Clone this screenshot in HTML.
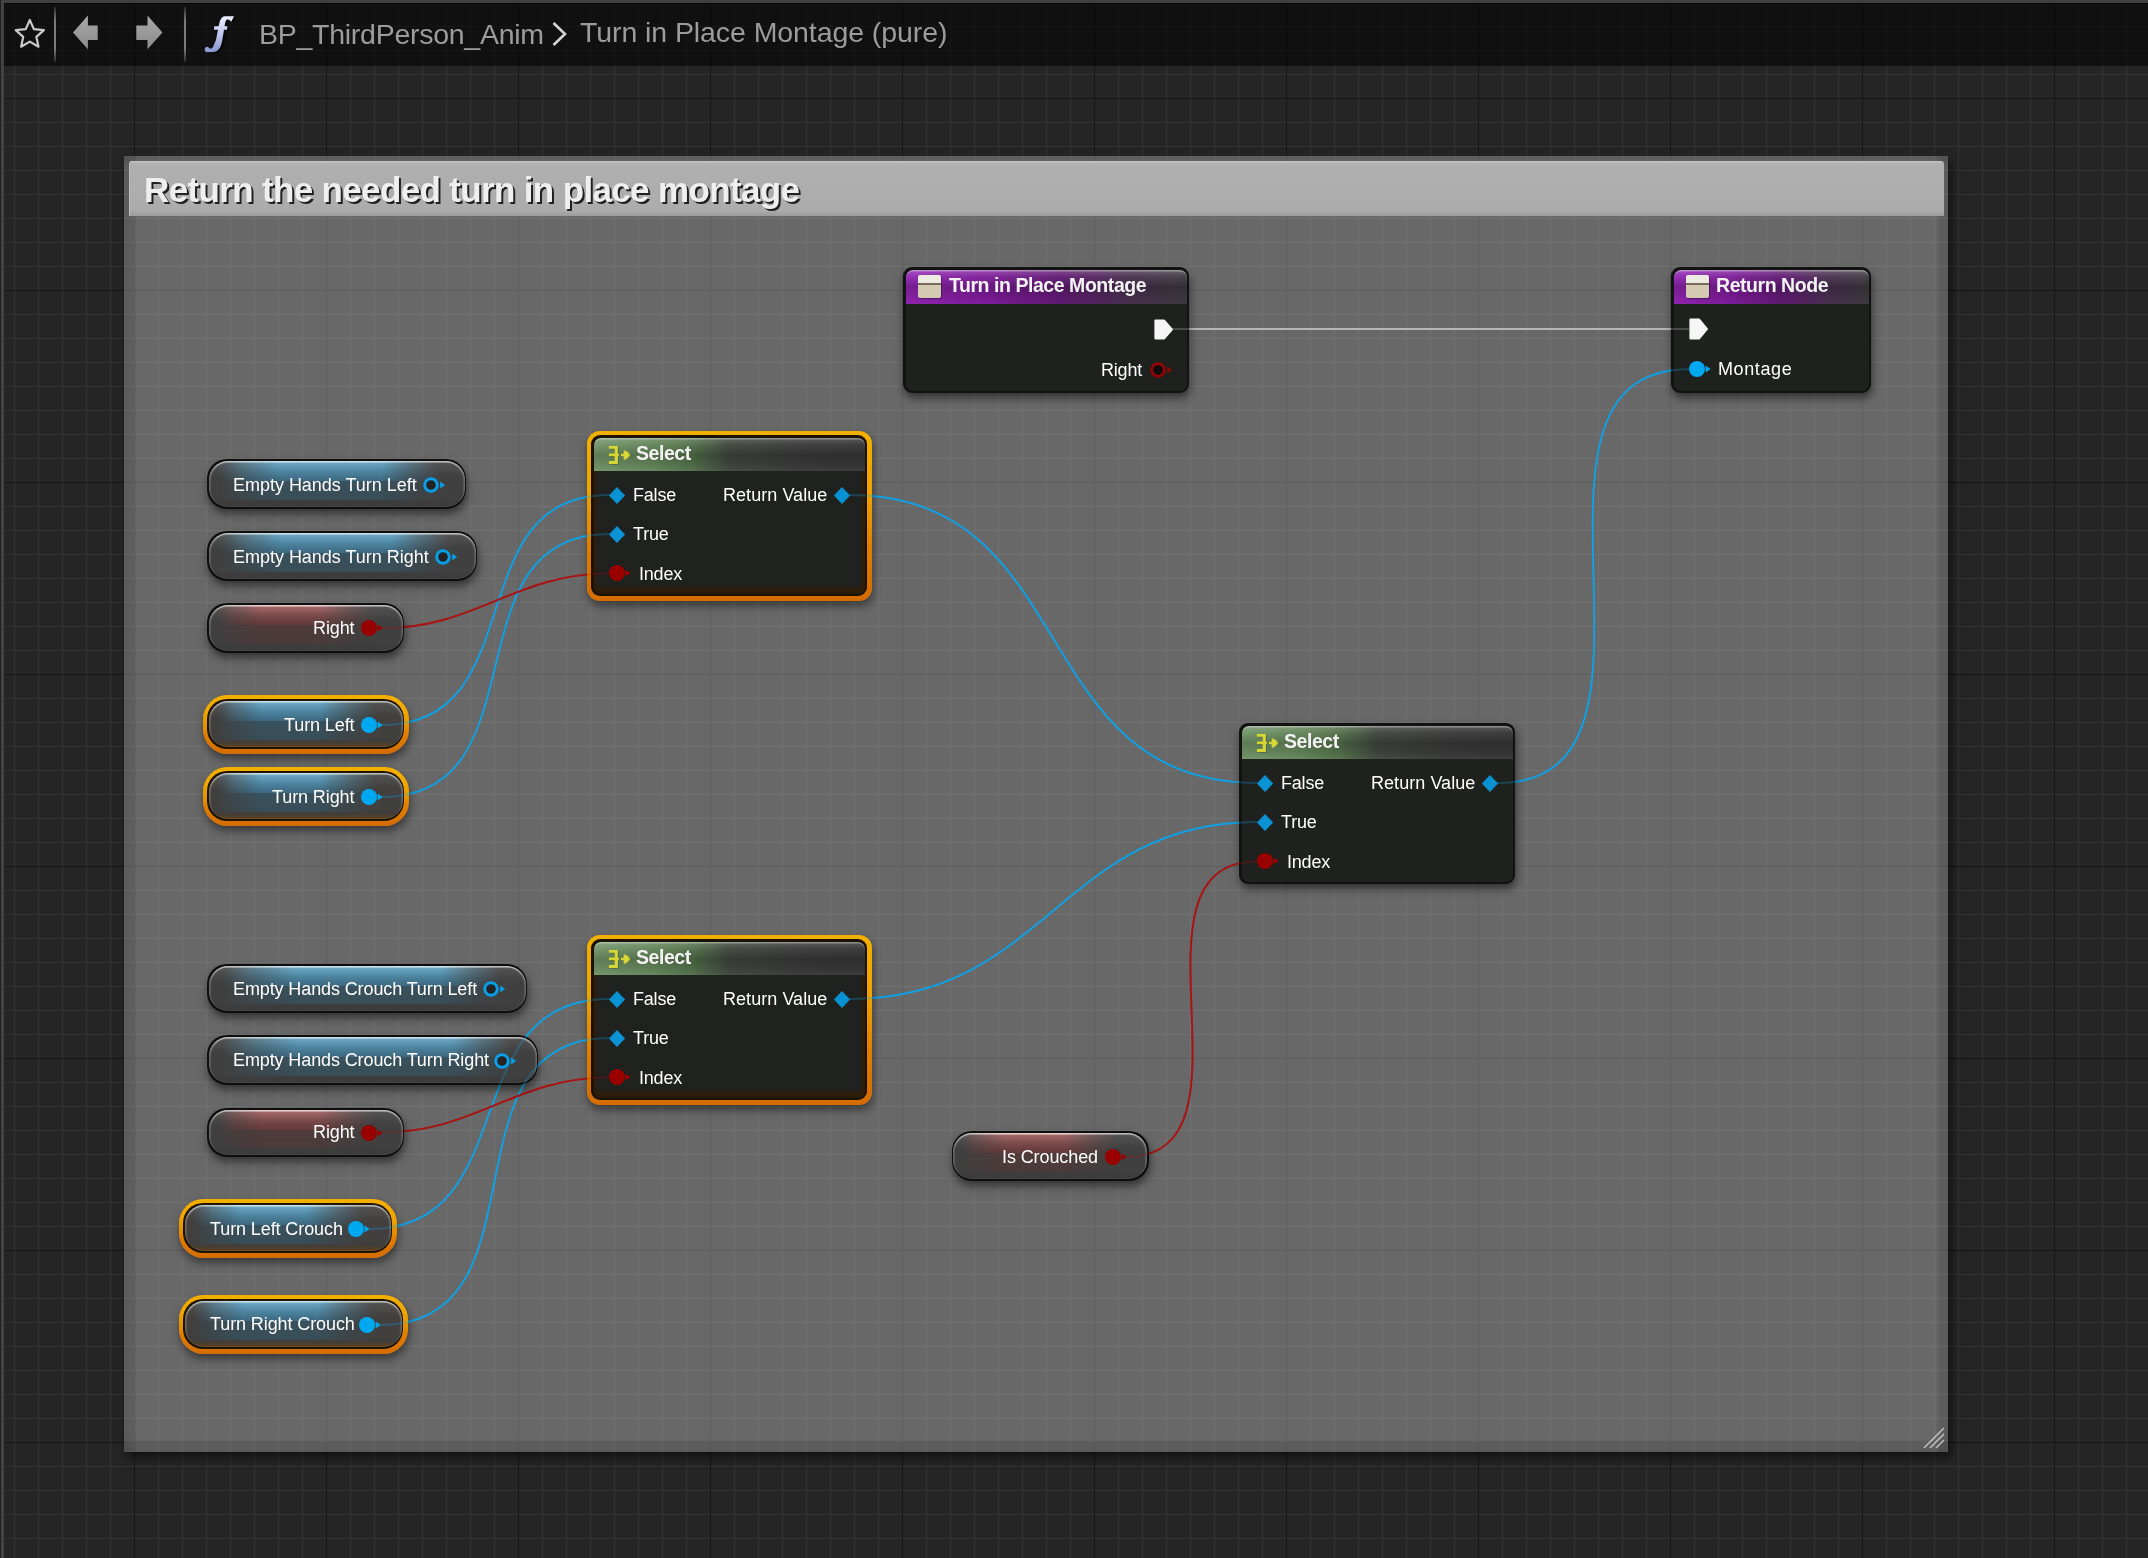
<!DOCTYPE html><html><head><meta charset="utf-8"><style>
*{margin:0;padding:0;box-sizing:border-box}
html,body{width:2148px;height:1558px;overflow:hidden;background:#252525}
body{position:relative;font-family:"Liberation Sans", sans-serif}
.abs{position:absolute}
.t{position:absolute;white-space:nowrap;font-family:"Liberation Sans", sans-serif;will-change:transform}
</style></head><body><div class="abs" style="left:0;top:0;width:2148px;height:1558px;background:linear-gradient(to right, #161616 0 1px, transparent 1px) 134px 0/192px 192px,linear-gradient(to bottom, #161616 0 1px, transparent 1px) 0 98px/192px 192px,linear-gradient(to right, #333333 0 1px, transparent 1px) 14px 0/24px 24px,linear-gradient(to bottom, #333333 0 1px, transparent 1px) 0 2px/24px 24px,#252525"></div>
<div class="abs" style="left:124px;top:156px;width:1824px;height:1296px;background:rgba(255,255,255,0.31);box-shadow:3px 5px 9px rgba(0,0,0,0.55)"></div>
<div class="abs" style="left:124px;top:156px;width:1824px;height:1296px;background:linear-gradient(to right, rgba(0,0,0,0.13) 0, rgba(0,0,0,0.1) 8px, rgba(0,0,0,0) 13px) left top/14px 100% no-repeat,linear-gradient(to left, rgba(0,0,0,0.13) 0, rgba(0,0,0,0.1) 8px, rgba(0,0,0,0) 13px) right top/14px 100% no-repeat,linear-gradient(to top, rgba(0,0,0,0.14) 0, rgba(0,0,0,0.1) 8px, rgba(0,0,0,0) 14px) left bottom/100% 15px no-repeat,linear-gradient(to bottom, rgba(0,0,0,0.1) 0, rgba(0,0,0,0.08) 5px, rgba(0,0,0,0) 8px) left top/100% 8px no-repeat"></div>
<div class="abs" style="left:129px;top:161px;width:1815px;height:55px;background:linear-gradient(#c4c4c4 0, #b2b2b2 2.5px, #afafaf 10%, #acacac 90%, #9c9c9c 100%);border-left:1px solid #bdbdbd;border-radius:3px 3px 0 0"></div>
<div class="t" style="left:144.00px;top:172.37px;font-size:35px;line-height:35px;font-weight:700;color:#efefef;letter-spacing:-0.65px;text-shadow:2px 2px 0 #202020;">Return the needed turn in place montage</div>
<svg class="abs" style="left:1920px;top:1426px" width="26" height="24" viewBox="0 0 26 24"><path d="M4 22 L24 2 M10 22 L24 8 M16 22 L24 14" stroke="#cfcfcf" stroke-width="1.6" fill="none" opacity="0.85"/></svg>
<svg class="abs" style="left:0;top:0" width="2148" height="1558"><path d="M1172 329 C1344.3 329 1516.7 329 1689 329" stroke="#b8b8b8" stroke-width="2" fill="none" opacity="1"/><path d="M1498 783 C1699.6 783 1487.4 369.3 1689 369.3" stroke="#12a0e2" stroke-width="1.9" fill="none" opacity="1"/><path d="M850 495 C1081.7 495 1025.3 783 1257 783" stroke="#12a0e2" stroke-width="1.9" fill="none" opacity="1"/><path d="M850 999 C1044.7 999 1062.3 822 1257 822" stroke="#12a0e2" stroke-width="1.9" fill="none" opacity="1"/><path d="M1126 1157 C1268.2 1157 1114.8 861.5 1257 861.5" stroke="#a81414" stroke-width="1.9" fill="none" opacity="1"/><path d="M382 725 C534.3 725 456.7 495 609 495" stroke="#12a0e2" stroke-width="1.9" fill="none" opacity="1"/><path d="M382 797 C545.3 797 445.7 534 609 534" stroke="#12a0e2" stroke-width="1.9" fill="none" opacity="1"/><path d="M382 628.3 C476.0 628.3 515.0 573.4 609 573.4" stroke="#a81414" stroke-width="1.9" fill="none" opacity="1"/><path d="M369 1229 C525.7 1229 452.3 999 609 999" stroke="#12a0e2" stroke-width="1.9" fill="none" opacity="1"/><path d="M380 1325 C552.0 1325 437.0 1038 609 1038" stroke="#12a0e2" stroke-width="1.9" fill="none" opacity="1"/><path d="M382 1132.5 C476.0 1132.5 515.0 1077.4 609 1077.4" stroke="#a81414" stroke-width="1.9" fill="none" opacity="1"/></svg>
<div class="abs" style="left:903px;top:267px;width:286px;height:126px;border-radius:9px;background:#121212;box-shadow:1px 5px 9px rgba(0,0,0,0.5);"></div>
<div class="abs" style="left:905.5px;top:269.5px;width:281px;height:121px;border-radius:7px;background:rgba(32,34,32,0.96);"></div>
<div class="abs" style="left:905.5px;top:269.5px;width:281px;height:34px;border-radius:7px 7px 0 0;background:linear-gradient(to bottom, rgba(255,255,255,0.22) 0, rgba(255,255,255,0.05) 20%, rgba(0,0,0,0.18) 50%, rgba(0,0,0,0.08) 80%, rgba(255,255,255,0.0) 100%),linear-gradient(to right, #9024b0 0%, #7c1c98 30%, #601a72 55%, #48304e 80%, #3e3a40 100%);box-shadow:inset 0 1.5px 0 rgba(255,255,255,0.32)"></div>
<div class="abs" style="left:918px;top:274.5px;width:23px;height:23px;border-radius:2px;background:linear-gradient(#ebebe0 0 36%, #7a6a5a 36% 44%, #d4cab4 44% 100%);box-shadow:1px 1px 1px rgba(0,0,0,0.35)"></div>
<div class="t" style="left:949.00px;top:276.19px;font-size:19.5px;line-height:19.5px;font-weight:700;color:#f2f2f2;letter-spacing:-0.45px;">Turn in Place Montage</div>
<svg class="abs" style="left:1154px;top:319px" width="19" height="21" viewBox="0 0 19 21"><path d="M1.5 1.5 L9.9 1.5 L17.8 10.5 L9.9 19.5 L1.5 19.5 Z" fill="#f6f6f6" stroke="#f6f6f6" stroke-width="2.2" stroke-linejoin="round"/></svg>
<div class="t" style="right:1006.00px;top:360.76px;font-size:18px;line-height:18px;font-weight:400;color:#ffffff;letter-spacing:-0.2px;">Right</div>
<svg class="abs" style="left:1146.00px;top:357.50px" width="30" height="24" viewBox="0 0 30 24"><path d="M21.2 8.4 L26.2 12 L21.2 15.6 Z" fill="#8e0606"/><circle cx="12" cy="12" r="6.3" fill="#0c0c0c" stroke="#8e0606" stroke-width="3"/></svg>
<div class="abs" style="left:1671px;top:267px;width:200px;height:126px;border-radius:9px;background:#121212;box-shadow:1px 5px 9px rgba(0,0,0,0.5);"></div>
<div class="abs" style="left:1673.5px;top:269.5px;width:195px;height:121px;border-radius:7px;background:rgba(32,34,32,0.96);"></div>
<div class="abs" style="left:1673.5px;top:269.5px;width:195px;height:34px;border-radius:7px 7px 0 0;background:linear-gradient(to bottom, rgba(255,255,255,0.22) 0, rgba(255,255,255,0.05) 20%, rgba(0,0,0,0.18) 50%, rgba(0,0,0,0.08) 80%, rgba(255,255,255,0.0) 100%),linear-gradient(to right, #9024b0 0%, #7c1c98 30%, #601a72 55%, #48304e 80%, #3e3a40 100%);box-shadow:inset 0 1.5px 0 rgba(255,255,255,0.32)"></div>
<div class="abs" style="left:1686px;top:275px;width:23px;height:23px;border-radius:2px;background:linear-gradient(#ebebe0 0 36%, #7a6a5a 36% 44%, #d4cab4 44% 100%);box-shadow:1px 1px 1px rgba(0,0,0,0.35)"></div>
<div class="t" style="left:1716.00px;top:276.49px;font-size:19.5px;line-height:19.5px;font-weight:700;color:#f2f2f2;letter-spacing:-0.45px;">Return Node</div>
<svg class="abs" style="left:1689px;top:318px" width="19" height="22" viewBox="0 0 19 22"><path d="M1.5 1.5 L9.9 1.5 L17.8 11.0 L9.9 20.5 L1.5 20.5 Z" fill="#f6f6f6" stroke="#f6f6f6" stroke-width="2.2" stroke-linejoin="round"/></svg>
<svg class="abs" style="left:1685.00px;top:357.30px" width="30" height="24" viewBox="0 0 30 24"><path d="M20.6 8.4 L25.6 12 L20.6 15.6 Z" fill="#00a8f0"/><circle cx="12" cy="12" r="8.0" fill="#00a8f0"/></svg>
<div class="t" style="left:1718.00px;top:360.46px;font-size:18px;line-height:18px;font-weight:400;color:#ffffff;letter-spacing:0.6px;">Montage</div>
<div class="abs" style="left:586.5px;top:430.5px;width:285px;height:170px;border-radius:13px;background:linear-gradient(#f4b000 0%, #eea400 35%, #e07c00 70%, #d46c00 100%);box-shadow:1px 5px 9px rgba(0,0,0,0.45)"></div>
<div class="abs" style="left:591px;top:435px;width:276px;height:161px;border-radius:9px;background:#1a1206;"></div>
<div class="abs" style="left:593.5px;top:437.5px;width:271px;height:156px;border-radius:7px;background:linear-gradient(to bottom, rgba(32,34,32,0.97) 0, rgba(32,34,32,0.97) 94%, rgba(46,30,10,0.97) 97.5%, rgba(40,26,8,0.97) 100%);box-shadow:inset 3px 0 0 rgba(46,30,10,0.95), inset -3px 0 0 rgba(46,30,10,0.95);"></div>
<div class="abs" style="left:593.5px;top:437.5px;width:271px;height:33.5px;border-radius:7px 7px 0 0;background:linear-gradient(to bottom, rgba(255,255,255,0.18) 0, rgba(255,255,255,0.03) 22%, rgba(0,0,0,0.16) 52%, rgba(0,0,0,0.06) 82%, rgba(255,255,255,0.03) 100%),linear-gradient(to right, #729468 0%, #628458 22%, #52704a 36%, #40463e 50%, #3a3a3a 75%, #363636 100%);box-shadow:inset 0 1.5px 0 rgba(255,255,255,0.32)"></div>
<svg class="abs" style="left:606px;top:444px" width="26" height="22" viewBox="0 0 26 22"><path d="M2.9 1.9 H11.9 V19.9 H2.9 V17 H8.7 V12.3 H2.9 V9.5 H8.7 V4.8 H2.9 Z" fill="rgba(0,0,0,0.25)" transform="translate(0.8,0.8)"/><path d="M2.9 1.9 H11.9 V9.5 H12.8 V12.3 H11.9 V19.9 H2.9 V17 H8.7 V12.3 H2.9 V9.5 H8.7 V4.8 H2.9 Z" fill="#d6d634"/><path d="M15 9.8 H18 V12.2 H15 Z" fill="#d6d634"/><path d="M17.7 6.2 C20.5 6.2 22.6 8.6 24.2 11 C22.6 13.4 20.5 15.8 17.7 15.8 Z" fill="#d6d634"/></svg>
<div class="t" style="left:636.00px;top:443.99px;font-size:19.5px;line-height:19.5px;font-weight:700;color:#f2f2f2;letter-spacing:-0.45px;">Select</div>
<svg class="abs" style="left:607.50px;top:485.70px" width="18" height="19" viewBox="0 0 18 19"><path d="M0.9 9.5 L9 1 L17.1 9.5 L9 18 Z" fill="#0a92d2"/></svg>
<div class="t" style="left:633.00px;top:486.36px;font-size:18px;line-height:18px;font-weight:400;color:#ffffff;letter-spacing:-0.2px;">False</div>
<svg class="abs" style="left:607.50px;top:524.70px" width="18" height="19" viewBox="0 0 18 19"><path d="M0.9 9.5 L9 1 L17.1 9.5 L9 18 Z" fill="#0a92d2"/></svg>
<div class="t" style="left:633.00px;top:525.46px;font-size:18px;line-height:18px;font-weight:400;color:#ffffff;letter-spacing:-0.2px;">True</div>
<svg class="abs" style="left:605.00px;top:561.40px" width="30" height="24" viewBox="0 0 30 24"><path d="M20.6 8.4 L25.6 12 L20.6 15.6 Z" fill="#990000"/><circle cx="12" cy="12" r="8.0" fill="#990000"/></svg>
<div class="t" style="left:639.00px;top:565.06px;font-size:18px;line-height:18px;font-weight:400;color:#ffffff;letter-spacing:-0.2px;">Index</div>
<div class="t" style="right:1321.00px;top:486.36px;font-size:18px;line-height:18px;font-weight:400;color:#ffffff;letter-spacing:0.05px;">Return Value</div>
<svg class="abs" style="left:832.80px;top:485.70px" width="18" height="19" viewBox="0 0 18 19"><path d="M0.9 9.5 L9 1 L17.1 9.5 L9 18 Z" fill="#0a92d2"/></svg>
<div class="abs" style="left:1239.4px;top:723px;width:276.0px;height:161px;border-radius:9px;background:#121212;box-shadow:1px 5px 9px rgba(0,0,0,0.5);"></div>
<div class="abs" style="left:1241.9px;top:725.5px;width:271.0px;height:156px;border-radius:7px;background:rgba(32,34,32,0.96);"></div>
<div class="abs" style="left:1241.9px;top:725.5px;width:271.0px;height:33.5px;border-radius:7px 7px 0 0;background:linear-gradient(to bottom, rgba(255,255,255,0.18) 0, rgba(255,255,255,0.03) 22%, rgba(0,0,0,0.16) 52%, rgba(0,0,0,0.06) 82%, rgba(255,255,255,0.03) 100%),linear-gradient(to right, #729468 0%, #628458 22%, #52704a 36%, #40463e 50%, #3a3a3a 75%, #363636 100%);box-shadow:inset 0 1.5px 0 rgba(255,255,255,0.32)"></div>
<svg class="abs" style="left:1254.4px;top:732px" width="26" height="22" viewBox="0 0 26 22"><path d="M2.9 1.9 H11.9 V19.9 H2.9 V17 H8.7 V12.3 H2.9 V9.5 H8.7 V4.8 H2.9 Z" fill="rgba(0,0,0,0.25)" transform="translate(0.8,0.8)"/><path d="M2.9 1.9 H11.9 V9.5 H12.8 V12.3 H11.9 V19.9 H2.9 V17 H8.7 V12.3 H2.9 V9.5 H8.7 V4.8 H2.9 Z" fill="#d6d634"/><path d="M15 9.8 H18 V12.2 H15 Z" fill="#d6d634"/><path d="M17.7 6.2 C20.5 6.2 22.6 8.6 24.2 11 C22.6 13.4 20.5 15.8 17.7 15.8 Z" fill="#d6d634"/></svg>
<div class="t" style="left:1284.40px;top:731.99px;font-size:19.5px;line-height:19.5px;font-weight:700;color:#f2f2f2;letter-spacing:-0.45px;">Select</div>
<svg class="abs" style="left:1255.90px;top:773.70px" width="18" height="19" viewBox="0 0 18 19"><path d="M0.9 9.5 L9 1 L17.1 9.5 L9 18 Z" fill="#0a92d2"/></svg>
<div class="t" style="left:1281.40px;top:774.36px;font-size:18px;line-height:18px;font-weight:400;color:#ffffff;letter-spacing:-0.2px;">False</div>
<svg class="abs" style="left:1255.90px;top:812.70px" width="18" height="19" viewBox="0 0 18 19"><path d="M0.9 9.5 L9 1 L17.1 9.5 L9 18 Z" fill="#0a92d2"/></svg>
<div class="t" style="left:1281.40px;top:813.46px;font-size:18px;line-height:18px;font-weight:400;color:#ffffff;letter-spacing:-0.2px;">True</div>
<svg class="abs" style="left:1253.40px;top:849.40px" width="30" height="24" viewBox="0 0 30 24"><path d="M20.6 8.4 L25.6 12 L20.6 15.6 Z" fill="#990000"/><circle cx="12" cy="12" r="8.0" fill="#990000"/></svg>
<div class="t" style="left:1287.40px;top:853.06px;font-size:18px;line-height:18px;font-weight:400;color:#ffffff;letter-spacing:-0.2px;">Index</div>
<div class="t" style="right:672.60px;top:774.36px;font-size:18px;line-height:18px;font-weight:400;color:#ffffff;letter-spacing:0.05px;">Return Value</div>
<svg class="abs" style="left:1481.20px;top:773.70px" width="18" height="19" viewBox="0 0 18 19"><path d="M0.9 9.5 L9 1 L17.1 9.5 L9 18 Z" fill="#0a92d2"/></svg>
<div class="abs" style="left:586.5px;top:934.5px;width:285px;height:170px;border-radius:13px;background:linear-gradient(#f4b000 0%, #eea400 35%, #e07c00 70%, #d46c00 100%);box-shadow:1px 5px 9px rgba(0,0,0,0.45)"></div>
<div class="abs" style="left:591px;top:939px;width:276px;height:161px;border-radius:9px;background:#1a1206;"></div>
<div class="abs" style="left:593.5px;top:941.5px;width:271px;height:156px;border-radius:7px;background:linear-gradient(to bottom, rgba(32,34,32,0.97) 0, rgba(32,34,32,0.97) 94%, rgba(46,30,10,0.97) 97.5%, rgba(40,26,8,0.97) 100%);box-shadow:inset 3px 0 0 rgba(46,30,10,0.95), inset -3px 0 0 rgba(46,30,10,0.95);"></div>
<div class="abs" style="left:593.5px;top:941.5px;width:271px;height:33.5px;border-radius:7px 7px 0 0;background:linear-gradient(to bottom, rgba(255,255,255,0.18) 0, rgba(255,255,255,0.03) 22%, rgba(0,0,0,0.16) 52%, rgba(0,0,0,0.06) 82%, rgba(255,255,255,0.03) 100%),linear-gradient(to right, #729468 0%, #628458 22%, #52704a 36%, #40463e 50%, #3a3a3a 75%, #363636 100%);box-shadow:inset 0 1.5px 0 rgba(255,255,255,0.32)"></div>
<svg class="abs" style="left:606px;top:948px" width="26" height="22" viewBox="0 0 26 22"><path d="M2.9 1.9 H11.9 V19.9 H2.9 V17 H8.7 V12.3 H2.9 V9.5 H8.7 V4.8 H2.9 Z" fill="rgba(0,0,0,0.25)" transform="translate(0.8,0.8)"/><path d="M2.9 1.9 H11.9 V9.5 H12.8 V12.3 H11.9 V19.9 H2.9 V17 H8.7 V12.3 H2.9 V9.5 H8.7 V4.8 H2.9 Z" fill="#d6d634"/><path d="M15 9.8 H18 V12.2 H15 Z" fill="#d6d634"/><path d="M17.7 6.2 C20.5 6.2 22.6 8.6 24.2 11 C22.6 13.4 20.5 15.8 17.7 15.8 Z" fill="#d6d634"/></svg>
<div class="t" style="left:636.00px;top:947.99px;font-size:19.5px;line-height:19.5px;font-weight:700;color:#f2f2f2;letter-spacing:-0.45px;">Select</div>
<svg class="abs" style="left:607.50px;top:989.70px" width="18" height="19" viewBox="0 0 18 19"><path d="M0.9 9.5 L9 1 L17.1 9.5 L9 18 Z" fill="#0a92d2"/></svg>
<div class="t" style="left:633.00px;top:990.36px;font-size:18px;line-height:18px;font-weight:400;color:#ffffff;letter-spacing:-0.2px;">False</div>
<svg class="abs" style="left:607.50px;top:1028.70px" width="18" height="19" viewBox="0 0 18 19"><path d="M0.9 9.5 L9 1 L17.1 9.5 L9 18 Z" fill="#0a92d2"/></svg>
<div class="t" style="left:633.00px;top:1029.46px;font-size:18px;line-height:18px;font-weight:400;color:#ffffff;letter-spacing:-0.2px;">True</div>
<svg class="abs" style="left:605.00px;top:1065.40px" width="30" height="24" viewBox="0 0 30 24"><path d="M20.6 8.4 L25.6 12 L20.6 15.6 Z" fill="#990000"/><circle cx="12" cy="12" r="8.0" fill="#990000"/></svg>
<div class="t" style="left:639.00px;top:1069.06px;font-size:18px;line-height:18px;font-weight:400;color:#ffffff;letter-spacing:-0.2px;">Index</div>
<div class="t" style="right:1321.00px;top:990.36px;font-size:18px;line-height:18px;font-weight:400;color:#ffffff;letter-spacing:0.05px;">Return Value</div>
<svg class="abs" style="left:832.80px;top:989.70px" width="18" height="19" viewBox="0 0 18 19"><path d="M0.9 9.5 L9 1 L17.1 9.5 L9 18 Z" fill="#0a92d2"/></svg>
<div class="abs" style="left:207px;top:459px;width:259px;height:50px;border-radius:20px;background:#0e0e0e;box-shadow:1px 5px 8px rgba(0,0,0,0.5);"><div class="abs" style="left:1.5px;top:1.5px;right:1.5px;bottom:2.2px;border-radius:18.5px;background:rgba(68,68,68,0.92);overflow:hidden"><div class="abs" style="left:0;top:0;right:0;height:20px;background:linear-gradient(to bottom, rgba(115,185,218,0.95) 0, rgba(92,165,200,0.92) 12%, rgba(76,142,176,0.88) 45%, rgba(60,112,138,0.85) 100%);-webkit-mask-image:linear-gradient(to right, rgba(0,0,0,0) 4%, rgba(0,0,0,0.5) 13%, #000 27%, #000 67.3%, rgba(0,0,0,0.45) 78.4%, rgba(0,0,0,0) 89.6%);"></div><div class="abs" style="left:0;top:20px;right:0;height:19px;background:linear-gradient(to bottom, rgba(56,84,98,0.88) 0, rgba(55,80,92,0.82) 100%);-webkit-mask-image:linear-gradient(to right, rgba(0,0,0,0) 4%, rgba(0,0,0,0.5) 13%, #000 27%, #000 67.3%, rgba(0,0,0,0.45) 78.4%, rgba(0,0,0,0) 89.6%);"></div><div class="abs" style="left:0;top:0;right:0;bottom:0;border-radius:18.5px;background:linear-gradient(to bottom, rgba(255,255,255,0.10), rgba(255,255,255,0) 35%, rgba(0,0,0,0) 80%, rgba(0,0,0,0.10));box-shadow:inset 0 1.5px 0 rgba(255,255,255,0.38), inset 1.5px 1.5px 1px rgba(255,255,255,0.22), inset -1.5px 1.5px 1px rgba(255,255,255,0.22), inset 0 -1px 0 rgba(255,255,255,0.07)"></div></div></div>
<div class="t" style="left:232.50px;top:475.66px;font-size:18px;line-height:18px;font-weight:400;color:#ffffff;letter-spacing:-0.02px;">Empty Hands Turn Left</div>
<svg class="abs" style="left:419.30px;top:473.00px" width="30" height="24" viewBox="0 0 30 24"><path d="M21.2 8.4 L26.2 12 L21.2 15.6 Z" fill="#0a9ee6"/><circle cx="12" cy="12" r="6.3" fill="#232323" stroke="#0a9ee6" stroke-width="3"/></svg>
<div class="abs" style="left:207px;top:531px;width:270px;height:50px;border-radius:20px;background:#0e0e0e;box-shadow:1px 5px 8px rgba(0,0,0,0.5);"><div class="abs" style="left:1.5px;top:1.5px;right:1.5px;bottom:2.2px;border-radius:18.5px;background:rgba(68,68,68,0.92);overflow:hidden"><div class="abs" style="left:0;top:0;right:0;height:20px;background:linear-gradient(to bottom, rgba(115,185,218,0.95) 0, rgba(92,165,200,0.92) 12%, rgba(76,142,176,0.88) 45%, rgba(60,112,138,0.85) 100%);-webkit-mask-image:linear-gradient(to right, rgba(0,0,0,0) 4%, rgba(0,0,0,0.5) 13%, #000 27%, #000 68.7%, rgba(0,0,0,0.45) 79.5%, rgba(0,0,0,0) 90.3%);"></div><div class="abs" style="left:0;top:20px;right:0;height:19px;background:linear-gradient(to bottom, rgba(56,84,98,0.88) 0, rgba(55,80,92,0.82) 100%);-webkit-mask-image:linear-gradient(to right, rgba(0,0,0,0) 4%, rgba(0,0,0,0.5) 13%, #000 27%, #000 68.7%, rgba(0,0,0,0.45) 79.5%, rgba(0,0,0,0) 90.3%);"></div><div class="abs" style="left:0;top:0;right:0;bottom:0;border-radius:18.5px;background:linear-gradient(to bottom, rgba(255,255,255,0.10), rgba(255,255,255,0) 35%, rgba(0,0,0,0) 80%, rgba(0,0,0,0.10));box-shadow:inset 0 1.5px 0 rgba(255,255,255,0.38), inset 1.5px 1.5px 1px rgba(255,255,255,0.22), inset -1.5px 1.5px 1px rgba(255,255,255,0.22), inset 0 -1px 0 rgba(255,255,255,0.07)"></div></div></div>
<div class="t" style="left:232.50px;top:547.66px;font-size:18px;line-height:18px;font-weight:400;color:#ffffff;letter-spacing:-0.02px;">Empty Hands Turn Right</div>
<svg class="abs" style="left:430.60px;top:545.00px" width="30" height="24" viewBox="0 0 30 24"><path d="M21.2 8.4 L26.2 12 L21.2 15.6 Z" fill="#0a9ee6"/><circle cx="12" cy="12" r="6.3" fill="#232323" stroke="#0a9ee6" stroke-width="3"/></svg>
<div class="abs" style="left:207px;top:603px;width:197px;height:50px;border-radius:20px;background:#0e0e0e;box-shadow:1px 5px 8px rgba(0,0,0,0.5);"><div class="abs" style="left:1.5px;top:1.5px;right:1.5px;bottom:2.2px;border-radius:18.5px;background:rgba(68,68,68,0.92);overflow:hidden"><div class="abs" style="left:0;top:0;right:0;height:20px;background:linear-gradient(to bottom, rgba(200,125,125,0.95) 0, rgba(165,92,92,0.9) 10%, rgba(130,70,70,0.85) 50%, rgba(105,58,58,0.85) 100%);-webkit-mask-image:linear-gradient(to right, rgba(0,0,0,0) 4%, rgba(0,0,0,0.5) 13%, #000 27%, #000 56.9%, rgba(0,0,0,0.45) 71.0%, rgba(0,0,0,0) 85.2%);"></div><div class="abs" style="left:0;top:20px;right:0;height:19px;background:linear-gradient(to bottom, rgba(82,58,58,0.85) 0, rgba(78,58,58,0.8) 100%);-webkit-mask-image:linear-gradient(to right, rgba(0,0,0,0) 4%, rgba(0,0,0,0.5) 13%, #000 27%, #000 56.9%, rgba(0,0,0,0.45) 71.0%, rgba(0,0,0,0) 85.2%);"></div><div class="abs" style="left:0;top:0;right:0;bottom:0;border-radius:18.5px;background:linear-gradient(to bottom, rgba(255,255,255,0.10), rgba(255,255,255,0) 35%, rgba(0,0,0,0) 80%, rgba(0,0,0,0.10));box-shadow:inset 0 1.5px 0 rgba(255,255,255,0.38), inset 1.5px 1.5px 1px rgba(255,255,255,0.22), inset -1.5px 1.5px 1px rgba(255,255,255,0.22), inset 0 -1px 0 rgba(255,255,255,0.07)"></div></div></div>
<div class="t" style="right:1793.50px;top:618.96px;font-size:18px;line-height:18px;font-weight:400;color:#ffffff;letter-spacing:-0.1px;">Right</div>
<svg class="abs" style="left:357.00px;top:616.30px" width="30" height="24" viewBox="0 0 30 24"><path d="M20.6 8.4 L25.6 12 L20.6 15.6 Z" fill="#990000"/><circle cx="12" cy="12" r="8.0" fill="#990000"/></svg>
<div class="abs" style="left:202.5px;top:694.5px;width:206px;height:59px;border-radius:24.5px;background:linear-gradient(#f4b000 0%, #eea400 35%, #e07c00 70%, #d46c00 100%);box-shadow:1px 5px 8px rgba(0,0,0,0.45)"></div>
<div class="abs" style="left:207px;top:699px;width:197px;height:50px;border-radius:20px;background:#1e1404;"><div class="abs" style="left:1.5px;top:1.5px;right:1.5px;bottom:2.2px;border-radius:18.5px;background:rgba(68,68,68,0.92);overflow:hidden"><div class="abs" style="left:0;top:0;right:0;height:20px;background:linear-gradient(to bottom, rgba(115,185,218,0.95) 0, rgba(92,165,200,0.92) 12%, rgba(76,142,176,0.88) 45%, rgba(60,112,138,0.85) 100%);-webkit-mask-image:linear-gradient(to right, rgba(0,0,0,0) 4%, rgba(0,0,0,0.5) 13%, #000 27%, #000 57.0%, rgba(0,0,0,0.45) 71.2%, rgba(0,0,0,0) 85.4%);"></div><div class="abs" style="left:0;top:20px;right:0;height:19px;background:linear-gradient(to bottom, rgba(56,84,98,0.88) 0, rgba(55,80,92,0.82) 100%);-webkit-mask-image:linear-gradient(to right, rgba(0,0,0,0) 4%, rgba(0,0,0,0.5) 13%, #000 27%, #000 57.0%, rgba(0,0,0,0.45) 71.2%, rgba(0,0,0,0) 85.4%);"></div><div class="abs" style="left:0;right:0;bottom:0;height:6px;background:linear-gradient(rgba(130,75,10,0),rgba(130,75,10,0.6))"></div><div class="abs" style="left:0;top:0;right:0;bottom:0;border-radius:18.5px;background:linear-gradient(to bottom, rgba(255,255,255,0.10), rgba(255,255,255,0) 35%, rgba(0,0,0,0) 80%, rgba(0,0,0,0.10));box-shadow:inset 0 1.5px 0 rgba(255,255,255,0.38), inset 1.5px 1.5px 1px rgba(255,255,255,0.22), inset -1.5px 1.5px 1px rgba(255,255,255,0.22), inset 0 -1px 0 rgba(255,255,255,0.07)"></div></div></div>
<div class="t" style="right:1793.50px;top:715.66px;font-size:18px;line-height:18px;font-weight:400;color:#ffffff;letter-spacing:-0.1px;">Turn Left</div>
<svg class="abs" style="left:357.30px;top:713.00px" width="30" height="24" viewBox="0 0 30 24"><path d="M20.6 8.4 L25.6 12 L20.6 15.6 Z" fill="#00a8f0"/><circle cx="12" cy="12" r="8.0" fill="#00a8f0"/></svg>
<div class="abs" style="left:202.5px;top:766.5px;width:206px;height:59px;border-radius:24.5px;background:linear-gradient(#f4b000 0%, #eea400 35%, #e07c00 70%, #d46c00 100%);box-shadow:1px 5px 8px rgba(0,0,0,0.45)"></div>
<div class="abs" style="left:207px;top:771px;width:197px;height:50px;border-radius:20px;background:#1e1404;"><div class="abs" style="left:1.5px;top:1.5px;right:1.5px;bottom:2.2px;border-radius:18.5px;background:rgba(68,68,68,0.92);overflow:hidden"><div class="abs" style="left:0;top:0;right:0;height:20px;background:linear-gradient(to bottom, rgba(115,185,218,0.95) 0, rgba(92,165,200,0.92) 12%, rgba(76,142,176,0.88) 45%, rgba(60,112,138,0.85) 100%);-webkit-mask-image:linear-gradient(to right, rgba(0,0,0,0) 4%, rgba(0,0,0,0.5) 13%, #000 27%, #000 57.0%, rgba(0,0,0,0.45) 71.2%, rgba(0,0,0,0) 85.4%);"></div><div class="abs" style="left:0;top:20px;right:0;height:19px;background:linear-gradient(to bottom, rgba(56,84,98,0.88) 0, rgba(55,80,92,0.82) 100%);-webkit-mask-image:linear-gradient(to right, rgba(0,0,0,0) 4%, rgba(0,0,0,0.5) 13%, #000 27%, #000 57.0%, rgba(0,0,0,0.45) 71.2%, rgba(0,0,0,0) 85.4%);"></div><div class="abs" style="left:0;right:0;bottom:0;height:6px;background:linear-gradient(rgba(130,75,10,0),rgba(130,75,10,0.6))"></div><div class="abs" style="left:0;top:0;right:0;bottom:0;border-radius:18.5px;background:linear-gradient(to bottom, rgba(255,255,255,0.10), rgba(255,255,255,0) 35%, rgba(0,0,0,0) 80%, rgba(0,0,0,0.10));box-shadow:inset 0 1.5px 0 rgba(255,255,255,0.38), inset 1.5px 1.5px 1px rgba(255,255,255,0.22), inset -1.5px 1.5px 1px rgba(255,255,255,0.22), inset 0 -1px 0 rgba(255,255,255,0.07)"></div></div></div>
<div class="t" style="right:1793.50px;top:787.66px;font-size:18px;line-height:18px;font-weight:400;color:#ffffff;letter-spacing:-0.1px;">Turn Right</div>
<svg class="abs" style="left:357.30px;top:785.00px" width="30" height="24" viewBox="0 0 30 24"><path d="M20.6 8.4 L25.6 12 L20.6 15.6 Z" fill="#00a8f0"/><circle cx="12" cy="12" r="8.0" fill="#00a8f0"/></svg>
<div class="abs" style="left:207px;top:964px;width:320px;height:49px;border-radius:20px;background:#0e0e0e;box-shadow:1px 5px 8px rgba(0,0,0,0.5);"><div class="abs" style="left:1.5px;top:1.5px;right:1.5px;bottom:2.2px;border-radius:18.5px;background:rgba(68,68,68,0.92);overflow:hidden"><div class="abs" style="left:0;top:0;right:0;height:20px;background:linear-gradient(to bottom, rgba(115,185,218,0.95) 0, rgba(92,165,200,0.92) 12%, rgba(76,142,176,0.88) 45%, rgba(60,112,138,0.85) 100%);-webkit-mask-image:linear-gradient(to right, rgba(0,0,0,0) 4%, rgba(0,0,0,0.5) 13%, #000 27%, #000 73.2%, rgba(0,0,0,0.45) 82.6%, rgba(0,0,0,0) 91.9%);"></div><div class="abs" style="left:0;top:20px;right:0;height:18px;background:linear-gradient(to bottom, rgba(56,84,98,0.88) 0, rgba(55,80,92,0.82) 100%);-webkit-mask-image:linear-gradient(to right, rgba(0,0,0,0) 4%, rgba(0,0,0,0.5) 13%, #000 27%, #000 73.2%, rgba(0,0,0,0.45) 82.6%, rgba(0,0,0,0) 91.9%);"></div><div class="abs" style="left:0;top:0;right:0;bottom:0;border-radius:18.5px;background:linear-gradient(to bottom, rgba(255,255,255,0.10), rgba(255,255,255,0) 35%, rgba(0,0,0,0) 80%, rgba(0,0,0,0.10));box-shadow:inset 0 1.5px 0 rgba(255,255,255,0.38), inset 1.5px 1.5px 1px rgba(255,255,255,0.22), inset -1.5px 1.5px 1px rgba(255,255,255,0.22), inset 0 -1px 0 rgba(255,255,255,0.07)"></div></div></div>
<div class="t" style="left:232.50px;top:979.66px;font-size:18px;line-height:18px;font-weight:400;color:#ffffff;letter-spacing:-0.11px;">Empty Hands Crouch Turn Left</div>
<svg class="abs" style="left:479.40px;top:977.00px" width="30" height="24" viewBox="0 0 30 24"><path d="M21.2 8.4 L26.2 12 L21.2 15.6 Z" fill="#0a9ee6"/><circle cx="12" cy="12" r="6.3" fill="#232323" stroke="#0a9ee6" stroke-width="3"/></svg>
<div class="abs" style="left:207px;top:1035px;width:331px;height:50px;border-radius:20px;background:#0e0e0e;box-shadow:1px 5px 8px rgba(0,0,0,0.5);"><div class="abs" style="left:1.5px;top:1.5px;right:1.5px;bottom:2.2px;border-radius:18.5px;background:rgba(68,68,68,0.92);overflow:hidden"><div class="abs" style="left:0;top:0;right:0;height:20px;background:linear-gradient(to bottom, rgba(115,185,218,0.95) 0, rgba(92,165,200,0.92) 12%, rgba(76,142,176,0.88) 45%, rgba(60,112,138,0.85) 100%);-webkit-mask-image:linear-gradient(to right, rgba(0,0,0,0) 4%, rgba(0,0,0,0.5) 13%, #000 27%, #000 74.1%, rgba(0,0,0,0.45) 83.1%, rgba(0,0,0,0) 92.0%);"></div><div class="abs" style="left:0;top:20px;right:0;height:19px;background:linear-gradient(to bottom, rgba(56,84,98,0.88) 0, rgba(55,80,92,0.82) 100%);-webkit-mask-image:linear-gradient(to right, rgba(0,0,0,0) 4%, rgba(0,0,0,0.5) 13%, #000 27%, #000 74.1%, rgba(0,0,0,0.45) 83.1%, rgba(0,0,0,0) 92.0%);"></div><div class="abs" style="left:0;top:0;right:0;bottom:0;border-radius:18.5px;background:linear-gradient(to bottom, rgba(255,255,255,0.10), rgba(255,255,255,0) 35%, rgba(0,0,0,0) 80%, rgba(0,0,0,0.10));box-shadow:inset 0 1.5px 0 rgba(255,255,255,0.38), inset 1.5px 1.5px 1px rgba(255,255,255,0.22), inset -1.5px 1.5px 1px rgba(255,255,255,0.22), inset 0 -1px 0 rgba(255,255,255,0.07)"></div></div></div>
<div class="t" style="left:232.50px;top:1051.46px;font-size:18px;line-height:18px;font-weight:400;color:#ffffff;letter-spacing:-0.11px;">Empty Hands Crouch Turn Right</div>
<svg class="abs" style="left:490.30px;top:1048.80px" width="30" height="24" viewBox="0 0 30 24"><path d="M21.2 8.4 L26.2 12 L21.2 15.6 Z" fill="#0a9ee6"/><circle cx="12" cy="12" r="6.3" fill="#232323" stroke="#0a9ee6" stroke-width="3"/></svg>
<div class="abs" style="left:207px;top:1108px;width:197px;height:49px;border-radius:20px;background:#0e0e0e;box-shadow:1px 5px 8px rgba(0,0,0,0.5);"><div class="abs" style="left:1.5px;top:1.5px;right:1.5px;bottom:2.2px;border-radius:18.5px;background:rgba(68,68,68,0.92);overflow:hidden"><div class="abs" style="left:0;top:0;right:0;height:20px;background:linear-gradient(to bottom, rgba(200,125,125,0.95) 0, rgba(165,92,92,0.9) 10%, rgba(130,70,70,0.85) 50%, rgba(105,58,58,0.85) 100%);-webkit-mask-image:linear-gradient(to right, rgba(0,0,0,0) 4%, rgba(0,0,0,0.5) 13%, #000 27%, #000 57.1%, rgba(0,0,0,0.45) 71.2%, rgba(0,0,0,0) 85.4%);"></div><div class="abs" style="left:0;top:20px;right:0;height:18px;background:linear-gradient(to bottom, rgba(82,58,58,0.85) 0, rgba(78,58,58,0.8) 100%);-webkit-mask-image:linear-gradient(to right, rgba(0,0,0,0) 4%, rgba(0,0,0,0.5) 13%, #000 27%, #000 57.1%, rgba(0,0,0,0.45) 71.2%, rgba(0,0,0,0) 85.4%);"></div><div class="abs" style="left:0;top:0;right:0;bottom:0;border-radius:18.5px;background:linear-gradient(to bottom, rgba(255,255,255,0.10), rgba(255,255,255,0) 35%, rgba(0,0,0,0) 80%, rgba(0,0,0,0.10));box-shadow:inset 0 1.5px 0 rgba(255,255,255,0.38), inset 1.5px 1.5px 1px rgba(255,255,255,0.22), inset -1.5px 1.5px 1px rgba(255,255,255,0.22), inset 0 -1px 0 rgba(255,255,255,0.07)"></div></div></div>
<div class="t" style="right:1793.50px;top:1123.16px;font-size:18px;line-height:18px;font-weight:400;color:#ffffff;letter-spacing:-0.1px;">Right</div>
<svg class="abs" style="left:357.40px;top:1120.50px" width="30" height="24" viewBox="0 0 30 24"><path d="M20.6 8.4 L25.6 12 L20.6 15.6 Z" fill="#990000"/><circle cx="12" cy="12" r="8.0" fill="#990000"/></svg>
<div class="abs" style="left:178.5px;top:1198.5px;width:218px;height:59px;border-radius:24.5px;background:linear-gradient(#f4b000 0%, #eea400 35%, #e07c00 70%, #d46c00 100%);box-shadow:1px 5px 8px rgba(0,0,0,0.45)"></div>
<div class="abs" style="left:183px;top:1203px;width:209px;height:50px;border-radius:20px;background:#1e1404;"><div class="abs" style="left:1.5px;top:1.5px;right:1.5px;bottom:2.2px;border-radius:18.5px;background:rgba(68,68,68,0.92);overflow:hidden"><div class="abs" style="left:0;top:0;right:0;height:20px;background:linear-gradient(to bottom, rgba(115,185,218,0.95) 0, rgba(92,165,200,0.92) 12%, rgba(76,142,176,0.88) 45%, rgba(60,112,138,0.85) 100%);-webkit-mask-image:linear-gradient(to right, rgba(0,0,0,0) 4%, rgba(0,0,0,0.5) 13%, #000 27%, #000 58.9%, rgba(0,0,0,0.45) 72.4%, rgba(0,0,0,0) 85.9%);"></div><div class="abs" style="left:0;top:20px;right:0;height:19px;background:linear-gradient(to bottom, rgba(56,84,98,0.88) 0, rgba(55,80,92,0.82) 100%);-webkit-mask-image:linear-gradient(to right, rgba(0,0,0,0) 4%, rgba(0,0,0,0.5) 13%, #000 27%, #000 58.9%, rgba(0,0,0,0.45) 72.4%, rgba(0,0,0,0) 85.9%);"></div><div class="abs" style="left:0;right:0;bottom:0;height:6px;background:linear-gradient(rgba(130,75,10,0),rgba(130,75,10,0.6))"></div><div class="abs" style="left:0;top:0;right:0;bottom:0;border-radius:18.5px;background:linear-gradient(to bottom, rgba(255,255,255,0.10), rgba(255,255,255,0) 35%, rgba(0,0,0,0) 80%, rgba(0,0,0,0.10));box-shadow:inset 0 1.5px 0 rgba(255,255,255,0.38), inset 1.5px 1.5px 1px rgba(255,255,255,0.22), inset -1.5px 1.5px 1px rgba(255,255,255,0.22), inset 0 -1px 0 rgba(255,255,255,0.07)"></div></div></div>
<div class="t" style="left:210.00px;top:1219.66px;font-size:18px;line-height:18px;font-weight:400;color:#ffffff;letter-spacing:-0.1px;">Turn Left Crouch</div>
<svg class="abs" style="left:344.20px;top:1217.00px" width="30" height="24" viewBox="0 0 30 24"><path d="M20.6 8.4 L25.6 12 L20.6 15.6 Z" fill="#00a8f0"/><circle cx="12" cy="12" r="8.0" fill="#00a8f0"/></svg>
<div class="abs" style="left:178.5px;top:1294.5px;width:229px;height:59px;border-radius:24.5px;background:linear-gradient(#f4b000 0%, #eea400 35%, #e07c00 70%, #d46c00 100%);box-shadow:1px 5px 8px rgba(0,0,0,0.45)"></div>
<div class="abs" style="left:183px;top:1299px;width:220px;height:50px;border-radius:20px;background:#1e1404;"><div class="abs" style="left:1.5px;top:1.5px;right:1.5px;bottom:2.2px;border-radius:18.5px;background:rgba(68,68,68,0.92);overflow:hidden"><div class="abs" style="left:0;top:0;right:0;height:20px;background:linear-gradient(to bottom, rgba(115,185,218,0.95) 0, rgba(92,165,200,0.92) 12%, rgba(76,142,176,0.88) 45%, rgba(60,112,138,0.85) 100%);-webkit-mask-image:linear-gradient(to right, rgba(0,0,0,0) 4%, rgba(0,0,0,0.5) 13%, #000 27%, #000 61.0%, rgba(0,0,0,0.45) 73.9%, rgba(0,0,0,0) 86.8%);"></div><div class="abs" style="left:0;top:20px;right:0;height:19px;background:linear-gradient(to bottom, rgba(56,84,98,0.88) 0, rgba(55,80,92,0.82) 100%);-webkit-mask-image:linear-gradient(to right, rgba(0,0,0,0) 4%, rgba(0,0,0,0.5) 13%, #000 27%, #000 61.0%, rgba(0,0,0,0.45) 73.9%, rgba(0,0,0,0) 86.8%);"></div><div class="abs" style="left:0;right:0;bottom:0;height:6px;background:linear-gradient(rgba(130,75,10,0),rgba(130,75,10,0.6))"></div><div class="abs" style="left:0;top:0;right:0;bottom:0;border-radius:18.5px;background:linear-gradient(to bottom, rgba(255,255,255,0.10), rgba(255,255,255,0) 35%, rgba(0,0,0,0) 80%, rgba(0,0,0,0.10));box-shadow:inset 0 1.5px 0 rgba(255,255,255,0.38), inset 1.5px 1.5px 1px rgba(255,255,255,0.22), inset -1.5px 1.5px 1px rgba(255,255,255,0.22), inset 0 -1px 0 rgba(255,255,255,0.07)"></div></div></div>
<div class="t" style="left:210.00px;top:1315.36px;font-size:18px;line-height:18px;font-weight:400;color:#ffffff;letter-spacing:-0.1px;">Turn Right Crouch</div>
<svg class="abs" style="left:355.30px;top:1312.70px" width="30" height="24" viewBox="0 0 30 24"><path d="M20.6 8.4 L25.6 12 L20.6 15.6 Z" fill="#00a8f0"/><circle cx="12" cy="12" r="8.0" fill="#00a8f0"/></svg>
<div class="abs" style="left:951.5px;top:1131px;width:197.0999999999999px;height:50px;border-radius:20px;background:#0e0e0e;box-shadow:1px 5px 8px rgba(0,0,0,0.5);"><div class="abs" style="left:1.5px;top:1.5px;right:1.5px;bottom:2.2px;border-radius:18.5px;background:rgba(68,68,68,0.92);overflow:hidden"><div class="abs" style="left:0;top:0;right:0;height:20px;background:linear-gradient(to bottom, rgba(200,125,125,0.95) 0, rgba(165,92,92,0.9) 10%, rgba(130,70,70,0.85) 50%, rgba(105,58,58,0.85) 100%);-webkit-mask-image:linear-gradient(to right, rgba(0,0,0,0) 4%, rgba(0,0,0,0.5) 13%, #000 27%, #000 56.8%, rgba(0,0,0,0.45) 71.0%, rgba(0,0,0,0) 85.1%);"></div><div class="abs" style="left:0;top:20px;right:0;height:19px;background:linear-gradient(to bottom, rgba(82,58,58,0.85) 0, rgba(78,58,58,0.8) 100%);-webkit-mask-image:linear-gradient(to right, rgba(0,0,0,0) 4%, rgba(0,0,0,0.5) 13%, #000 27%, #000 56.8%, rgba(0,0,0,0.45) 71.0%, rgba(0,0,0,0) 85.1%);"></div><div class="abs" style="left:0;top:0;right:0;bottom:0;border-radius:18.5px;background:linear-gradient(to bottom, rgba(255,255,255,0.10), rgba(255,255,255,0) 35%, rgba(0,0,0,0) 80%, rgba(0,0,0,0.10));box-shadow:inset 0 1.5px 0 rgba(255,255,255,0.38), inset 1.5px 1.5px 1px rgba(255,255,255,0.22), inset -1.5px 1.5px 1px rgba(255,255,255,0.22), inset 0 -1px 0 rgba(255,255,255,0.07)"></div></div></div>
<div class="t" style="right:1050.00px;top:1147.66px;font-size:18px;line-height:18px;font-weight:400;color:#ffffff;letter-spacing:-0.1px;">Is Crouched</div>
<svg class="abs" style="left:1101.40px;top:1145.00px" width="30" height="24" viewBox="0 0 30 24"><path d="M20.6 8.4 L25.6 12 L20.6 15.6 Z" fill="#990000"/><circle cx="12" cy="12" r="8.0" fill="#990000"/></svg>
<svg class="abs" style="left:0;top:0;opacity:0.28" width="2148" height="1558"><path d="M1172 329 C1344.3 329 1516.7 329 1689 329" stroke="#b8b8b8" stroke-width="2" fill="none" opacity="1"/><path d="M1498 783 C1699.6 783 1487.4 369.3 1689 369.3" stroke="#12a0e2" stroke-width="1.9" fill="none" opacity="1"/><path d="M850 495 C1081.7 495 1025.3 783 1257 783" stroke="#12a0e2" stroke-width="1.9" fill="none" opacity="1"/><path d="M850 999 C1044.7 999 1062.3 822 1257 822" stroke="#12a0e2" stroke-width="1.9" fill="none" opacity="1"/><path d="M1126 1157 C1268.2 1157 1114.8 861.5 1257 861.5" stroke="#a81414" stroke-width="1.9" fill="none" opacity="1"/><path d="M382 725 C534.3 725 456.7 495 609 495" stroke="#12a0e2" stroke-width="1.9" fill="none" opacity="1"/><path d="M382 797 C545.3 797 445.7 534 609 534" stroke="#12a0e2" stroke-width="1.9" fill="none" opacity="1"/><path d="M382 628.3 C476.0 628.3 515.0 573.4 609 573.4" stroke="#a81414" stroke-width="1.9" fill="none" opacity="1"/><path d="M369 1229 C525.7 1229 452.3 999 609 999" stroke="#12a0e2" stroke-width="1.9" fill="none" opacity="1"/><path d="M380 1325 C552.0 1325 437.0 1038 609 1038" stroke="#12a0e2" stroke-width="1.9" fill="none" opacity="1"/><path d="M382 1132.5 C476.0 1132.5 515.0 1077.4 609 1077.4" stroke="#a81414" stroke-width="1.9" fill="none" opacity="1"/></svg>
<div class="abs" style="left:4px;top:3px;width:2144px;height:63px;background:rgba(0,0,0,0.55);border-top:1px solid rgba(0,0,0,0.6)"></div>
<div class="abs" style="left:0;top:0;width:2148px;height:3px;background:#414141"></div>
<div class="abs" style="left:0;top:0;width:4px;height:1558px;background:linear-gradient(to right,#202020 0 1px,#424242 1px 4px)"></div>
<svg class="abs" style="left:0;top:0" width="60" height="66"><polygon points="29.80,19.95 33.86,29.17 43.88,30.18 36.36,36.88 38.50,46.72 29.80,41.65 21.10,46.72 23.24,36.88 15.72,30.18 25.74,29.17" fill="none" stroke="#cacaca" stroke-width="2.2" stroke-linejoin="round"/></svg>
<div class="abs" style="left:53.5px;top:7px;width:2px;height:55px;background:linear-gradient(rgba(120,120,120,0.25),#7c7c7c 25%,#7c7c7c 75%,rgba(120,120,120,0.25))"></div>
<div class="abs" style="left:184px;top:7px;width:2px;height:55px;background:linear-gradient(rgba(120,120,120,0.25),#7c7c7c 25%,#7c7c7c 75%,rgba(120,120,120,0.25))"></div>
<svg class="abs" style="left:60px;top:0" width="120" height="66"><defs><linearGradient id="ag" x1="0" y1="0" x2="0" y2="1"><stop offset="0" stop-color="#a8a8a8"/><stop offset="1" stop-color="#8c8c8c"/></linearGradient></defs><path d="M13 32.6 L27.9 15.4 L27.9 25.6 L37.7 25.6 L37.7 40 L27.9 40 L27.9 49.3 Z" fill="url(#ag)"/><path d="M102.4 32.6 L87.5 15.4 L87.5 25.6 L76.3 25.6 L76.3 40 L87.5 40 L87.5 49.3 Z" fill="url(#ag)"/></svg>
<svg class="abs" style="left:0;top:0" width="260" height="66"><defs><linearGradient id="fg" gradientUnits="userSpaceOnUse" x1="0" y1="16" x2="0" y2="52"><stop offset="0" stop-color="#eef0ff"/><stop offset="0.5" stop-color="#c0c8ec"/><stop offset="1" stop-color="#8696d0"/></linearGradient></defs><path d="M224 16.2 L234 16.2 L231.3 21.8 C229.5 19.6 227.6 18.9 226.3 19.9 C225.6 21 225.1 23 224.8 25 L222.3 40 C221.5 46 219 51.2 214 52 L207 52.2 C205 52 204.5 50.5 204.7 49 C205.5 46.6 207.5 46 208.6 47.6 C209.6 49 211.6 49.2 213 47 L216 40 L219 24.5 C219.8 20 221.5 17 224 16.2 Z M214.3 26.3 L227.4 26.3 L227 29.8 L214 29.8 Z" fill="#000" opacity="0.55" transform="translate(2.5,1.5)"/><path d="M224 16.2 L234 16.2 L231.3 21.8 C229.5 19.6 227.6 18.9 226.3 19.9 C225.6 21 225.1 23 224.8 25 L222.3 40 C221.5 46 219 51.2 214 52 L207 52.2 C205 52 204.5 50.5 204.7 49 C205.5 46.6 207.5 46 208.6 47.6 C209.6 49 211.6 49.2 213 47 L216 40 L219 24.5 C219.8 20 221.5 17 224 16.2 Z M214.3 26.3 L227.4 26.3 L227 29.8 L214 29.8 Z" fill="url(#fg)"/></svg>
<div class="t" style="left:259.00px;top:19.97px;font-size:28.5px;line-height:28.5px;font-weight:400;color:#9c9c9c;letter-spacing:-0.27px;">BP_ThirdPerson_Anim</div>
<svg class="abs" style="left:548px;top:18px" width="24" height="32"><path d="M5.5 5 L17 16 L5.5 27" stroke="#d4d4d4" stroke-width="2.6" fill="none"/></svg>
<div class="t" style="left:580.00px;top:18.07px;font-size:28.5px;line-height:28.5px;font-weight:400;color:#9c9c9c;letter-spacing:-0.08px;">Turn in Place Montage (pure)</div></body></html>
